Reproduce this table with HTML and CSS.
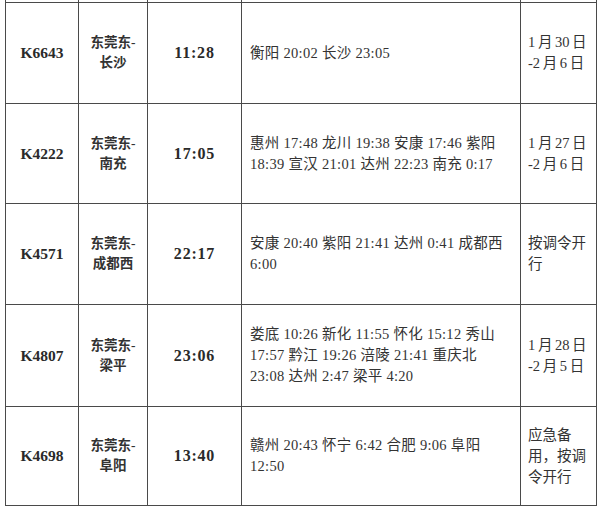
FILE: index.html
```html
<!DOCTYPE html>
<html>
<head>
<meta charset="utf-8">
<title>临客列车时刻</title>
<link rel="stylesheet" href="styles.css">
</head>
<body>
<table class="schedule">
  <colgroup>
    <col class="c-no">
    <col class="c-route">
    <col class="c-time">
    <col class="c-stops">
    <col class="c-date">
  </colgroup>
  <tbody>
    <tr class="cut"><td></td><td></td><td></td><td></td><td></td></tr>
    <tr class="r1">
      <td class="no">K6643</td>
      <td class="route">东莞东-<br>长沙</td>
      <td class="time">11:28</td>
      <td class="stops">衡阳 20:02 长沙 23:05</td>
      <td class="date">1 月 30 日<br>-2 月 6 日</td>
    </tr>
    <tr class="r2">
      <td class="no">K4222</td>
      <td class="route">东莞东-<br>南充</td>
      <td class="time">17:05</td>
      <td class="stops">惠州 17:48 龙川 19:38 安康 17:46 紫阳<br>18:39 宣汉 21:01 达州 22:23 南充 0:17</td>
      <td class="date">1 月 27 日<br>-2 月 6 日</td>
    </tr>
    <tr class="r3">
      <td class="no">K4571</td>
      <td class="route">东莞东-<br>成都西</td>
      <td class="time">22:17</td>
      <td class="stops">安康 20:40 紫阳 21:41 达州 0:41 成都西<br>6:00</td>
      <td class="date">按调令开<br>行</td>
    </tr>
    <tr class="r4">
      <td class="no">K4807</td>
      <td class="route">东莞东-<br>梁平</td>
      <td class="time">23:06</td>
      <td class="stops">娄底 10:26 新化 11:55 怀化 15:12 秀山<br>17:57 黔江 19:26 涪陵 21:41 重庆北<br>23:08 达州 2:47 梁平 4:20</td>
      <td class="date">1 月 28 日<br>-2 月 5 日</td>
    </tr>
    <tr class="r5">
      <td class="no">K4698</td>
      <td class="route">东莞东-<br>阜阳</td>
      <td class="time">13:40</td>
      <td class="stops">赣州 20:43 怀宁 6:42 合肥 9:06 阜阳<br>12:50</td>
      <td class="date">应急备<br>用，按调<br>令开行</td>
    </tr>
  </tbody>
</table>
</body>
</html>
```
FILE: styles.css
```css
html, body {
  margin: 0;
  padding: 0;
  background: #ffffff;
}

body {
  padding-left: 5px;
  color: #2e2e2e;
}

.schedule {
  border-collapse: collapse;
  table-layout: fixed;
  width: 591px;
}

.schedule td {
  font-family: "Liberation Serif", "Noto Sans CJK SC", serif;
  border: 1px solid #4a4a4a;
  padding: 0;
  vertical-align: middle;
}

.c-no { width: 73px; }
.c-route { width: 69px; }
.c-time { width: 94px; }
.c-stops { width: 279px; }
.c-date { width: 76px; }

.schedule .cut td {
  height: 2px;
  border-top: none;
}

.r1 td { height: 100px; }
.r2 td { height: 99px; }
.r3 td { height: 100px; }
.r4 td { height: 101px; }
.r5 td { height: 98px; }

.schedule .no {
  text-align: center;
  font-weight: bold;
  font-size: 15.5px;
  color: #2a2a2a;
}

.schedule .route {
  text-align: center;
  font-weight: bold;
  font-size: 13.5px;
  line-height: 20px;
  color: #333333;
}

.schedule .time {
  text-align: center;
  font-weight: bold;
  font-size: 16px;
  letter-spacing: 0.8px;
  color: #2a2a2a;
}

.schedule .stops {
  padding: 0 4px 0 8px;
  font-size: 14.5px;
  line-height: 21px;
  letter-spacing: 0.3px;
  color: #333333;
}

.schedule .date {
  padding: 0 4px 0 7px;
  font-size: 14.5px;
  line-height: 21px;
  word-spacing: -1px;
  color: #333333;
}
```
